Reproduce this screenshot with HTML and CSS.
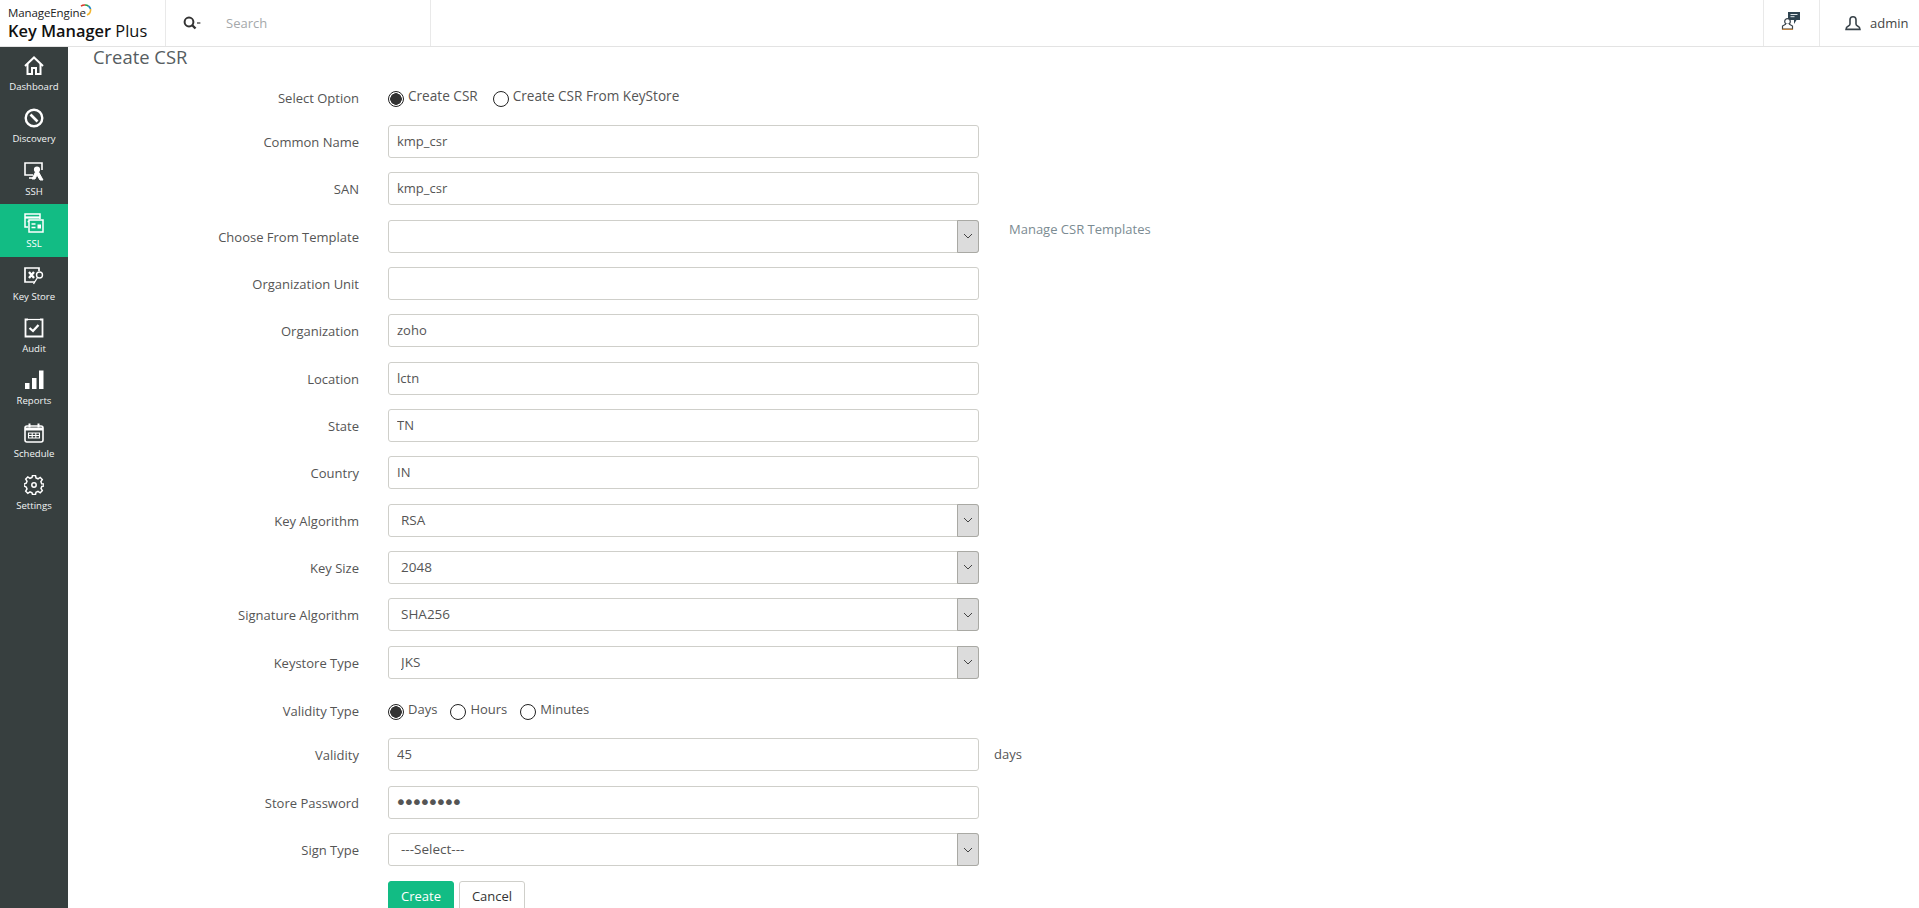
FILE: index.html
```html
<!DOCTYPE html>
<html lang="en">
<head>
<meta charset="utf-8">
<title>Key Manager Plus - Create CSR</title>
<link rel="stylesheet" href="styles.css">
</head>
<body>
<header class="topbar">
  <div class="brand">
    <div class="brand-top">ManageEngine<svg class="brand-arc" width="12" height="12" viewBox="0 0 12 12" fill="none" stroke-width="1.6"><path d="M1 2.2A6 6 0 0 1 5 1" stroke="#d9382c"/><path d="M5 1A6 6 0 0 1 8.4 2" stroke="#2f9e44"/><path d="M8.4 2A6 6 0 0 1 10.6 5" stroke="#1e88c9"/><path d="M10.6 5A6 6 0 0 1 7 11" stroke="#f2b632"/></svg></div>
    <div class="brand-name"><b>Key Manager</b> Plus</div>
  </div>
  <div class="search">
    <svg class="search-icon" width="18" height="14" viewBox="0 0 18 14" fill="none" stroke="#333"><circle cx="6" cy="6" r="4.400" stroke-width="2"/><path d="M9 9l3.500 3.500" stroke-width="2.400"/><path d="M14 7h3.400" stroke-width="1.200"/></svg>
    <span class="search-text">Search</span>
  </div>
  <div class="top-spacer"></div>
  <div class="top-cell top-help">
    <svg class="help-icon" width="20" height="20" viewBox="0 0 20 20" fill="none"><path d="M7 1h12v8h-3.500L13 13V9H7z" fill="#2e4350"/><path d="M9.500 3.500h7M9.500 5.700h4" stroke="#dfe6e9" stroke-width="1"/><circle cx="6.500" cy="10.500" r="2.800" stroke="#39434b" stroke-width="1.200" fill="#fff"/><path d="M5 13L1.500 15v3h10v-3L8 13" stroke="#39434b" stroke-width="1.200" fill="#fff"/><path d="M1 18.300h11" stroke="#c77d2c" stroke-width="1"/></svg>
  </div>
  <div class="top-cell top-user">
    <svg width="18" height="16" viewBox="0 0 18 16" fill="none" stroke="#3a444b" stroke-width="1.600"><path d="M6 9V4.800a3 3 0 0 1 6 0V9c0 1 .6 1.500 1.600 2 1.400.6 2.400 1.300 2.400 3.400H2c0-2.100 1-2.800 2.400-3.400C5.400 10.500 6 10 6 9z"/></svg>
    <span>admin</span>
  </div>
</header>

<div class="shell">
  <nav class="sidebar">
    <a class="nav-item">
      <svg class="nav-icon" viewBox="0 0 20 20" fill="none" stroke="#fff" stroke-width="2"><path d="M1 10L10 1.500 19 10"/><path d="M3.500 8v10h4.500v-6h4v6h4.500V8"/></svg>
      <span>Dashboard</span>
    </a>
    <a class="nav-item">
      <svg class="nav-icon" viewBox="0 0 20 20" fill="none" stroke="#fff"><circle cx="10" cy="10" r="8.300" stroke-width="2.400"/><path d="M6.500 6.500l7 7" stroke-width="2.600"/></svg>
      <span>Discovery</span>
    </a>
    <a class="nav-item">
      <svg class="nav-icon" viewBox="0 0 20 20" fill="none" stroke="#fff" stroke-width="1.600"><path d="M9 14H1V2h17v7"/><path d="M5 17h5"/><circle cx="13" cy="8.500" r="2.300" fill="#fff"/><path d="M12 10l-4 8h3l2-4 3 5h3l-5-9" fill="#fff" stroke-width="1"/></svg>
      <span>SSH</span>
    </a>
    <a class="nav-item nav-active">
      <svg class="nav-icon" viewBox="0 0 20 20" fill="none" stroke="#fff" stroke-width="1.500"><path d="M4 14H1V1h15v5"/><path d="M1 4.500h15" stroke-width="2.200"/><path d="M3.500 8.500H10"/><rect x="5" y="7" width="14" height="12" fill="#12bc84"/><path d="M7.500 11h4M7.500 14.500h4"/><rect x="13.500" y="11.500" width="3.500" height="4" fill="#fff" stroke="none"/></svg>
      <span>SSL</span>
    </a>
    <a class="nav-item">
      <svg class="nav-icon" viewBox="0 0 20 20" fill="none" stroke="#fff" stroke-width="1.700"><path d="M11 16H1V2h14v3"/><path d="M5 6l5 6M10 6l-5 6" stroke-width="2.300"/><circle cx="15.500" cy="9" r="3" stroke-width="1.400"/><path d="M13.500 11.500L9.500 18" stroke-width="1.300"/></svg>
      <span>Key Store</span>
    </a>
    <a class="nav-item">
      <svg class="nav-icon" viewBox="0 0 20 20" fill="none" stroke="#fff" stroke-width="1.800"><path d="M4 1.500H1.500v17h17v-17H16"/><path d="M4 1.500h12" stroke-width="1.200"/><path d="M5.500 10l3.500 3 5.500-6" stroke-width="2.300"/></svg>
      <span>Audit</span>
    </a>
    <a class="nav-item">
      <svg class="nav-icon" viewBox="0 0 20 20" fill="#fff"><rect x="1" y="13" width="4.500" height="6"/><rect x="8" y="8" width="4.500" height="11"/><rect x="15" y="0.500" width="4.500" height="18.500"/></svg>
      <span>Reports</span>
    </a>
    <a class="nav-item">
      <svg class="nav-icon" viewBox="0 0 20 20" fill="none" stroke="#fff"><rect x="1" y="3" width="18" height="16" rx="2" stroke-width="1.600"/><path d="M1 6h18" stroke-width="3"/><path d="M5.500 0.500v4M14.500 0.500v4" stroke-width="2"/><path d="M4.500 10h11v5h-11zM8.200 10v5M11.800 10v5M4.500 12.500h11" stroke-width="1.100"/></svg>
      <span>Schedule</span>
    </a>
    <a class="nav-item">
      <svg class="nav-icon" viewBox="0 0 20 20" fill="none" stroke="#fff" stroke-width="1.500"><path d="M8.500 1h3l.5 2.500 2 .8 2.200-1.400 2.100 2.100-1.400 2.200.8 2L20 9.500v2l-2.200.5-.8 2 1.300 2.200-2.100 2.100-2.200-1.400-2 .8-.5 2.300h-3L8 18.200l-2-.8-2.200 1.400-2.100-2.100L3 14.500l-.8-2L0 11.500v-2l2.200-.8.800-2L1.700 4.500l2.100-2.100L6 3.800l2-.8z" transform="translate(0 -.5)"/><circle cx="10" cy="10" r="2.200"/></svg>
      <span>Settings</span>
    </a>
  </nav>

  <main class="content">
    <h1 class="page-title">Create CSR</h1>
    <form class="csr-form">
      <div class="row row-radio">
        <label class="row-label row-label-top">Select Option</label>
        <div class="radios radios-large">
          <label class="radio radio-csr"><input type="radio" name="opt" checked><span>Create CSR</span></label>
          <label class="radio"><input type="radio" name="opt"><span>Create CSR From KeyStore</span></label>
        </div>
      </div>
      <div class="row">
        <label class="row-label">Common Name</label>
        <input class="field" type="text" value="kmp_csr">
      </div>
      <div class="row">
        <label class="row-label">SAN</label>
        <input class="field" type="text" value="kmp_csr">
      </div>
      <div class="row">
        <label class="row-label">Choose From Template</label>
        <div class="select-wrap">
          <select class="field field-select"><option></option></select>
          <span class="select-arrow"><svg width="10" height="6" viewBox="0 0 10 6" fill="none" stroke="#444"><path d="M1 1l4 4 4-4"/></svg></span>
        </div>
        <a class="side-link">Manage CSR Templates</a>
      </div>
      <div class="row">
        <label class="row-label">Organization Unit</label>
        <input class="field" type="text" value="">
      </div>
      <div class="row">
        <label class="row-label">Organization</label>
        <input class="field" type="text" value="zoho">
      </div>
      <div class="row">
        <label class="row-label">Location</label>
        <input class="field" type="text" value="lctn">
      </div>
      <div class="row">
        <label class="row-label">State</label>
        <input class="field" type="text" value="TN">
      </div>
      <div class="row">
        <label class="row-label">Country</label>
        <input class="field" type="text" value="IN">
      </div>
      <div class="row">
        <label class="row-label">Key Algorithm</label>
        <div class="select-wrap">
          <select class="field field-select"><option>RSA</option></select>
          <span class="select-arrow"><svg width="10" height="6" viewBox="0 0 10 6" fill="none" stroke="#444"><path d="M1 1l4 4 4-4"/></svg></span>
        </div>
      </div>
      <div class="row">
        <label class="row-label">Key Size</label>
        <div class="select-wrap">
          <select class="field field-select"><option>2048</option></select>
          <span class="select-arrow"><svg width="10" height="6" viewBox="0 0 10 6" fill="none" stroke="#444"><path d="M1 1l4 4 4-4"/></svg></span>
        </div>
      </div>
      <div class="row">
        <label class="row-label">Signature Algorithm</label>
        <div class="select-wrap">
          <select class="field field-select"><option>SHA256</option></select>
          <span class="select-arrow"><svg width="10" height="6" viewBox="0 0 10 6" fill="none" stroke="#444"><path d="M1 1l4 4 4-4"/></svg></span>
        </div>
      </div>
      <div class="row">
        <label class="row-label">Keystore Type</label>
        <div class="select-wrap">
          <select class="field field-select"><option>JKS</option></select>
          <span class="select-arrow"><svg width="10" height="6" viewBox="0 0 10 6" fill="none" stroke="#444"><path d="M1 1l4 4 4-4"/></svg></span>
        </div>
      </div>
      <div class="row row-radio row-validity">
        <label class="row-label row-label-top">Validity Type</label>
        <div class="radios">
          <label class="radio radio-days"><input type="radio" name="vt" checked><span>Days</span></label>
          <label class="radio radio-hours"><input type="radio" name="vt"><span>Hours</span></label>
          <label class="radio"><input type="radio" name="vt"><span>Minutes</span></label>
        </div>
      </div>
      <div class="row">
        <label class="row-label">Validity</label>
        <input class="field" type="text" value="45">
        <span class="side-unit">days</span>
      </div>
      <div class="row">
        <label class="row-label">Store Password</label>
        <input class="field field-password" type="password" value="password">
      </div>
      <div class="row">
        <label class="row-label">Sign Type</label>
        <div class="select-wrap">
          <select class="field field-select"><option>---Select---</option></select>
          <span class="select-arrow"><svg width="10" height="6" viewBox="0 0 10 6" fill="none" stroke="#444"><path d="M1 1l4 4 4-4"/></svg></span>
        </div>
      </div>
      <div class="actions">
        <button type="button" class="btn btn-primary">Create</button>
        <button type="button" class="btn btn-plain">Cancel</button>
      </div>
    </form>
  </main>
</div>
</body>
</html>
```

FILE: styles.css
```css
* { box-sizing: border-box; }
html, body { height: 100%; margin: 0; }
body {
  overflow: hidden;
  font-family: "Open Sans", "Liberation Sans", sans-serif;
  font-size: 13px;
  color: #555;
  background: #fff;
  display: flex;
  flex-direction: column;
}

/* top bar */
.topbar {
  flex: 0 0 47px;
  display: flex;
  align-items: stretch;
  border-bottom: 1px solid #e3e3e3;
  background: #fff;
}
.brand {
  width: 166px;
  padding: 5px 0 0 8px;
  border-right: 1px solid #e9e9e9;
}
.brand-top {
  display: flex;
  align-items: flex-start;
  font-size: 11.5px;
  line-height: 16px;
  color: #222;
  letter-spacing: -0.1px;
}
.brand-arc { margin: -1px 0 0 -6px; }
.brand-name {
  font-size: 16.400px;
  line-height: 20px;
  color: #111;
  white-space: nowrap;
}
.brand-name b { font-weight: 600; }
.search {
  width: 265px;
  display: flex;
  align-items: center;
  padding: 0 0 1px 17px;
  border-right: 1px solid #e9e9e9;
}
.search-icon { flex: none; }
.search-text { margin-left: 25px; color: #a5a8aa; font-size: 13px; }
.top-spacer { flex: 1; }
.top-cell {
  display: flex;
  align-items: center;
  border-left: 1px solid #e9e9e9;
}
.top-help { width: 56px; padding-left: 17px; }
.help-icon { margin-bottom: 4px; }
.top-user { width: 100px; padding-left: 24px; gap: 8px; color: #444; }

/* shell */
.shell { flex: 1; display: flex; min-height: 0; }
.sidebar {
  flex: 0 0 68px;
  background: #373f3f;
  display: flex;
  flex-direction: column;
}
.nav-item {
  flex: 0 0 52.4px;
  display: flex;
  flex-direction: column;
  align-items: center;
  padding-top: 9px;
  color: #f2f4f4;
  font-size: 9.600px;
  line-height: 14px;
}
.nav-icon { width: 20px; height: 20px; margin-bottom: 4px; flex: none; }
.nav-active { background: #12bc84; color: #fff; }

/* content */
.content { flex: 1; padding-left: 25px; min-width: 0; }
.page-title {
  margin: 0;
  height: 28px;
  font-size: 18.400px;
  font-weight: 400;
  line-height: 20px;
  color: #565d61;
}
.csr-form {
  margin-left: -25px;
  display: flex;
  flex-direction: column;
}
.row {
  display: flex;
  align-items: center;
  flex: 0 0 33px;
  margin-bottom: 14.33px;
}
.row-label {
  width: 291px;
  margin-right: 29px;
  text-align: right;
  flex: none;
  position: relative;
  top: 0.5px;
}
.row-label-top { top: -2px; }
.row-radio { flex-basis: 20px; margin-top: 15px; margin-bottom: 15px; }
.row-validity { margin-top: 10px; margin-bottom: 15.500px; }
.radios { display: flex; align-items: flex-start; }
.radios-large { font-size: 13.600px; }
.radio { display: flex; align-items: flex-start; margin-right: 7px; }
.radio span { position: relative; top: -4px; line-height: 18px; }
.radio-csr span { margin-right: 8px; }
.radio-days { margin-right: 13px; }
.radio-hours { margin-right: 13px; }
.radio input {
  appearance: none;
  width: 16px;
  height: 16px;
  margin: 0 4px 0 0;
  border: 1px solid #222;
  border-radius: 50%;
  background: #fff;
  flex: none;
}
.radio input:checked {
  background: radial-gradient(circle, #333 0, #333 5.5px, #fff 6px);
}
.field {
  width: 591px;
  height: 33px;
  border: 1px solid #cfcfca;
  border-radius: 3px;
  padding: 0 8px 1px;
  font: inherit;
  color: #555;
  background: #fff;
  flex: none;
  outline: none;
}
.field-password {
  padding-left: 6px;
  font-family: "DejaVu Sans", sans-serif;
  font-size: 20px;
  letter-spacing: -3.8px;
}
.select-wrap { position: relative; width: 591px; height: 33px; flex: none; }
.field-select { appearance: none; padding-left: 12px; display: block; font-size: 13.500px; }
.select-arrow {
  position: absolute;
  top: 0;
  right: 0;
  width: 22px;
  height: 33px;
  background: #dcdcdc;
  border: 1px solid #a9a9a4;
  border-radius: 0 3px 3px 0;
  display: flex;
  align-items: center;
  justify-content: center;
}
.side-link { margin: -15px 0 0 30px; color: #7b8b92; font-size: 13px; }
.side-unit { margin: -2px 0 0 15px; }
.actions { display: flex; gap: 5px; margin: 0.5px 0 0 320px; }
.btn {
  width: 66px;
  height: 33px;
  padding: 0 0 2px;
  border-radius: 3px;
  font: inherit;
  flex: none;
}
.btn-primary { border: 1px solid #12bc84; background: #12bc84; color: #fff; }
.btn-plain { border: 1px solid #cfcfca; background: #fff; color: #333; }
```
